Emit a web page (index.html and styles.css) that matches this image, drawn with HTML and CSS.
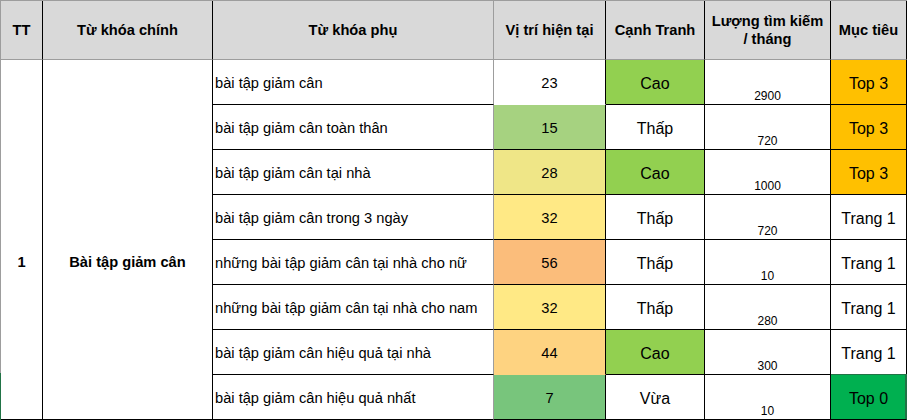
FILE: index.html
```html
<!DOCTYPE html>
<html lang="vi">
<head>
<meta charset="utf-8">
<title>Từ khóa</title>
<link rel="stylesheet" href="styles.css">
</head>
<body>
<div class="sheet">
  <div class="c h">TT</div>
  <div class="c h">Từ khóa chính</div>
  <div class="c h gr">Từ khóa phụ</div>
  <div class="c h">Vị trí hiện tại</div>
  <div class="c h">Cạnh Tranh</div>
  <div class="c h">Lượng tìm kiếm / tháng</div>
  <div class="c h">Mục tiêu</div>

  <div class="c merged b">1</div>
  <div class="c merged b">Bài tập giảm cân</div>

  <div class="c kw gr">bài tập giảm cân</div>
  <div class="c pos nob">23</div>
  <div class="c mid big cao">Cao</div>
  <div class="c vol">2900</div>
  <div class="c mid big top3">Top 3</div>

  <div class="c kw gr">bài tập giảm cân toàn thân</div>
  <div class="c pos p15">15</div>
  <div class="c mid big">Thấp</div>
  <div class="c vol">720</div>
  <div class="c mid big top3">Top 3</div>

  <div class="c kw gr">bài tập giảm cân tại nhà</div>
  <div class="c pos p28">28</div>
  <div class="c mid big cao">Cao</div>
  <div class="c vol">1000</div>
  <div class="c mid big top3">Top 3</div>

  <div class="c kw gr">bài tập giảm cân trong 3 ngày</div>
  <div class="c pos p32">32</div>
  <div class="c mid big">Thấp</div>
  <div class="c vol">720</div>
  <div class="c mid big">Trang 1</div>

  <div class="c kw gr">những bài tập giảm cân tại nhà cho nữ</div>
  <div class="c pos p56">56</div>
  <div class="c mid big">Thấp</div>
  <div class="c vol">10</div>
  <div class="c mid big">Trang 1</div>

  <div class="c kw gr">những bài tập giảm cân tại nhà cho nam</div>
  <div class="c pos p32">32</div>
  <div class="c mid big">Thấp</div>
  <div class="c vol">280</div>
  <div class="c mid big">Trang 1</div>

  <div class="c kw gr">bài tập giảm cân hiệu quả tại nhà</div>
  <div class="c pos p44 nob">44</div>
  <div class="c mid big cao">Cao</div>
  <div class="c vol">300</div>
  <div class="c mid big">Trang 1</div>

  <div class="c kw gr">bài tập giảm cân hiệu quả nhất</div>
  <div class="c pos p7">7</div>
  <div class="c mid big">Vừa</div>
  <div class="c vol">10</div>
  <div class="c mid big top0">Top 0</div>
</div>
</body>
</html>
```
FILE: styles.css
```css
html, body {
  margin: 0;
  padding: 0;
  background: #ffffff;
}

body {
  font-family: "Liberation Sans", Arial, sans-serif;
  color: #000000;
  overflow: hidden;
}

.sheet {
  position: relative;
  display: grid;
  grid-template-columns: 42px 170px 281px 112px 99px 126px 76px;
  grid-template-rows: 59px repeat(8, 45px);
  width: 907px;
  border-left: 1px solid #9d9d9d;
  border-top: 1px solid #9d9d9d;
  box-sizing: border-box;
}

.sheet::after {
  content: "";
  position: absolute;
  left: -1px;
  top: 372px;
  width: 1px;
  height: 48px;
  background: #217346;
}

.c {
  box-sizing: border-box;
  border-right: 1px solid #000000;
  border-bottom: 1px solid #000000;
  display: flex;
  align-items: center;
  font-size: 14.67px;
  line-height: 17px;
  min-width: 0;
  white-space: nowrap;
}

.h {
  background: #d9d9d9;
  border-bottom-color: #9d9d9d;
  font-weight: bold;
  justify-content: center;
  text-align: center;
  white-space: normal;
  padding: 0 4px 1px;
  line-height: 18px;
}

.gr {
  border-right-color: #9d9d9d;
}

.merged {
  grid-row: span 8;
  justify-content: center;
  padding-top: 46px;
}

.b {
  font-weight: bold;
}

.kw {
  padding: 2px 0 0 2px;
}

.pos {
  justify-content: center;
  padding-top: 2px;
}

.nob {
  border-bottom-color: transparent;
}

.mid {
  justify-content: center;
  padding-top: 2px;
}

.big {
  font-size: 16px;
}

.vol {
  justify-content: center;
  align-items: flex-end;
  font-size: 12px;
  line-height: 14px;
  padding-bottom: 1px;
}

.cao { background: #92d050; }
.top3 { background: #ffc000; }

.top0 {
  background: #00b050;
  border-right-color: #217346;
  box-shadow: inset -1px 0 0 #217346, 0 -1px 0 #217346;
}

.p15 { background: #a6d280; }
.p28 { background: #efe687; }
.p32 { background: #ffe985; }
.p56 { background: #fbbd7b; }
.p44 { background: #fed381; }
.p7 { background: #78c57c; }
```
